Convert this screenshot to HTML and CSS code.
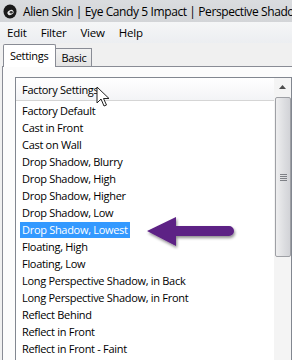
FILE: index.html
```html
<!DOCTYPE html>
<html>
<head>
<meta charset="utf-8">
<link rel="stylesheet" href="styles.css">
</head>
<body>
<div class="window">
  <div class="titlebar">
    <svg class="app-icon" width="14" height="15" viewBox="0 0 14 15">
      <ellipse cx="7" cy="7.5" rx="6.5" ry="7" fill="#1a1a1a"/>
      <ellipse cx="7.5" cy="8.5" rx="3.2" ry="2.4" fill="#e8e8e8" transform="rotate(-30 7.5 8.5)"/>
      <ellipse cx="8.2" cy="8.2" rx="1.6" ry="1.3" fill="#333"/>
    </svg>
    <span class="title">Alien Skin | Eye Candy 5 Impact | Perspective Shadow</span>
  </div>
  <div class="menubar">
    <span class="menu-item">Edit</span>
    <span class="menu-item">Filter</span>
    <span class="menu-item">View</span>
    <span class="menu-item">Help</span>
  </div>
  <div class="tabs">
    <span class="tab active">Settings</span>
    <span class="tab">Basic</span>
  </div>
  <div class="pane">
    <div class="listbox">
      <div class="list">
        <div class="list-header">Factory Settings</div>
        <div class="rows">
          <div class="row"><span>Factory Default</span></div>
          <div class="row"><span>Cast in Front</span></div>
          <div class="row"><span>Cast on Wall</span></div>
          <div class="row"><span>Drop Shadow, Blurry</span></div>
          <div class="row"><span>Drop Shadow, High</span></div>
          <div class="row"><span>Drop Shadow, Higher</span></div>
          <div class="row"><span>Drop Shadow, Low</span></div>
          <div class="row selected"><span>Drop Shadow, Lowest</span></div>
          <div class="row"><span>Floating, High</span></div>
          <div class="row"><span>Floating, Low</span></div>
          <div class="row"><span>Long Perspective Shadow, in Back</span></div>
          <div class="row"><span>Long Perspective Shadow, in Front</span></div>
          <div class="row"><span>Reflect Behind</span></div>
          <div class="row"><span>Reflect in Front</span></div>
          <div class="row"><span>Reflect in Front - Faint</span></div>
        </div>
      </div>
      <div class="scrollbar">
        <div class="sb-btn"><svg width="7" height="4" viewBox="0 0 7 4"><path d="M0 4 L3.5 0 L7 4 Z" fill="#4d4d4d"/></svg></div>
        <div class="sb-track">
          <div class="sb-thumb">
            <div class="grip"></div>
          </div>
          <div class="sb-rest"></div>
        </div>
        <div class="sb-btn"><svg width="7" height="4" viewBox="0 0 7 4"><path d="M0 0 L3.5 4 L7 0 Z" fill="#4d4d4d"/></svg></div>
      </div>
    </div>
  </div>
</div>
<svg class="pointer" width="14" height="22" viewBox="0 0 14 22">
  <path d="M1 1 L1 17 L5 13 L8 20 L10.5 19 L7.5 12.5 L13 12.5 Z" fill="#fff" stroke="#222" stroke-width="1" stroke-linejoin="round"/>
</svg>
<svg class="callout-arrow" width="100" height="48" viewBox="0 0 100 48">
  <defs>
    <filter id="sh" x="-20%" y="-30%" width="140%" height="160%">
      <feGaussianBlur in="SourceAlpha" stdDeviation="1.6"/>
      <feOffset dx="1" dy="2" result="b"/>
      <feComponentTransfer><feFuncA type="linear" slope="0.45"/></feComponentTransfer>
      <feMerge><feMergeNode/><feMergeNode in="SourceGraphic"/></feMerge>
    </filter>
  </defs>
  <path d="M6 25 L35 11 L35 20 L88 20 A5 5 0 0 1 88 30 L35 30 L35 40 Z" fill="#5d2085" filter="url(#sh)"/>
</svg>
</body>
</html>
```
FILE: styles.css
```css
* { box-sizing: border-box; }
html, body {
  margin: 0;
  padding: 0;
  width: 292px;
  height: 360px;
  overflow: hidden;
  background: #f0f0f0;
  font-family: "Open Sans", "Noto Sans", sans-serif;
  font-size: 11px;
  letter-spacing: -0.3px;
  color: #000;
}
.window {
  width: 292px;
  height: 360px;
  display: flex;
  flex-direction: column;
}
.titlebar {
  height: 22px;
  display: flex;
  align-items: center;
  gap: 6px;
  padding-left: 3px;
  background: linear-gradient(#dadcdf, #d3d5d8);
  white-space: nowrap;
  overflow: hidden;
  flex: none;
}
.app-icon { flex: none; }
.title {
  font-size: 12px;
  letter-spacing: -0.4px;
  color: #000;
  padding-top: 1px;
}
.menubar {
  height: 21px;
  display: flex;
  align-items: center;
  padding-left: 7px;
  gap: 14px;
  background: linear-gradient(#f5f6f7, #eceef1);
  font-size: 11.5px;
  letter-spacing: -0.2px;
  flex: none;
}
.tabs {
  height: 23px;
  display: flex;
  align-items: flex-end;
  padding-left: 3px;
  flex: none;
  position: relative;
  z-index: 1;
}
.tab {
  height: 18px;
  padding: 0 5px;
  border: 1px solid #898c95;
  border-bottom: none;
  background: linear-gradient(#f2f2f2, #e3e3e3);
  display: flex;
  align-items: center;
}
.tab.active {
  height: 23px;
  padding: 0 7px 2px 6px;
  background: #fff;
  margin-bottom: -1px;
  border-radius: 2px 2px 0 0;
}
.tab + .tab { border-left: none; }
.pane {
  flex: 1;
  min-height: 0;
  margin-left: 2px;
  border-top: 1px solid #898c95;
  border-left: 1px solid #898c95;
  background: #fcfcfc;
  padding: 10px 0 0 12px;
}
.listbox {
  height: 300px;
  width: 277px;
  border: 1px solid #828790;
  border-bottom: none;
  background: #fff;
  display: flex;
}
.list {
  flex: 1;
  min-width: 0;
}
.list-header {
  height: 23px;
  border-bottom: 1px solid #d5d5d5;
  background: linear-gradient(#ffffff, #f3f4f6);
  padding-left: 6px;
  display: flex;
  align-items: center;
  margin-bottom: 1px;
}
.row {
  height: 17px;
  display: flex;
  align-items: center;
  padding-left: 4px;
  white-space: nowrap;
}
.row span {
  padding: 0 2px;
  line-height: 16px;
}
.row.selected span {
  background: #3399ff;
  color: #fff;
}
.scrollbar {
  width: 17px;
  flex: none;
  display: flex;
  flex-direction: column;
  background: #f4f4f4;
}
.sb-btn {
  height: 17px;
  flex: none;
  display: flex;
  align-items: center;
  justify-content: center;
}
.sb-track {
  flex: 1;
  display: flex;
  flex-direction: column;
  padding-top: 2px;
}
.sb-thumb {
  height: 160px;
  margin: 0 0 0 1px;
  border: 1px solid #9ea0a5;
  border-radius: 2px;
  background: linear-gradient(90deg, #eeeeef, #dcdde0 60%, #d2d3d7);
  display: flex;
  align-items: center;
  justify-content: center;
}
.grip {
  width: 7px;
  height: 7px;
  background: repeating-linear-gradient(#55585f 0 1px, transparent 1px 2px);
  opacity: 0.7;
}
.sb-rest { flex: 1; }
.pointer {
  position: absolute;
  left: 96px;
  top: 86px;
}
.callout-arrow {
  position: absolute;
  left: 141px;
  top: 206px;
}
```
